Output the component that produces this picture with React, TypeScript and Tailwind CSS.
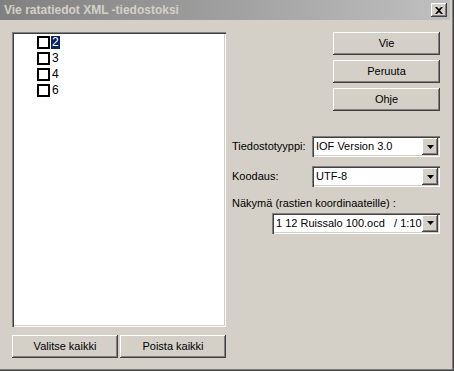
import React from "react";

const font = { fontFamily: "'Liberation Sans', Arial, sans-serif" };

function Btn({ label, className }: { label: string; className: string }) {
  return (
    <div
      className={
        "flex items-center justify-center bg-[#d4d0c8] text-[11px] text-black shadow-[inset_-1px_-1px_#404040,inset_1px_1px_#ffffff,inset_-2px_-2px_#808080] " +
        className
      }
    >
      {label}
    </div>
  );
}

function Combo({ value, className }: { value: string; className: string }) {
  return (
    <div
      className={
        "flex items-center bg-white p-[2px] shadow-[inset_1px_1px_#808080,inset_2px_2px_#404040,inset_-1px_-1px_#ffffff,inset_-2px_-2px_#d4d0c8] " +
        className
      }
    >
      <div className="flex-1 overflow-hidden whitespace-pre pl-[2px] text-[11px] text-black">{value}</div>
      <div className="flex h-full w-[16px] items-center justify-center bg-[#d4d0c8] shadow-[inset_-1px_-1px_#404040,inset_1px_1px_#ffffff,inset_-2px_-2px_#808080]">
        <svg width="7" height="4" viewBox="0 0 7 4">
          <polygon points="0,0 7,0 3.5,4" fill="#000" />
        </svg>
      </div>
    </div>
  );
}

export default function App() {
  const items = ["2", "3", "4", "6"];
  return (
    <div
      className="relative flex h-[371px] w-[454px] flex-col bg-[#d4d0c8] shadow-[inset_-1px_-1px_#404040,inset_-2px_-2px_#808080]"
      style={font}
    >
      <div className="flex h-[20px] w-[450px] items-center justify-between bg-gradient-to-r from-[#808080] to-[#c0c0c0] pl-[4px] pr-[3px]">
        <span className="text-[12px] font-bold text-[#d4d0c8]">Vie ratatiedot XML -tiedostoksi</span>
        <div className="flex h-[14px] w-[16px] items-center justify-center bg-[#d4d0c8] shadow-[inset_-1px_-1px_#404040,inset_1px_1px_#ffffff,inset_-2px_-2px_#808080]">
          <svg width="8" height="7" viewBox="0 0 8 7">
            <path d="M0 0 L2 0 L4 2 L6 0 L8 0 L5 3.5 L8 7 L6 7 L4 5 L2 7 L0 7 L3 3.5 Z" fill="#000" />
          </svg>
        </div>
      </div>
      <div className="flex flex-1 pl-[12px] pt-[12px]">
        <div className="flex w-[214px] flex-col">
          <div className="h-[295px] bg-white p-[2px] shadow-[inset_1px_1px_#808080,inset_2px_2px_#404040,inset_-1px_-1px_#ffffff,inset_-2px_-2px_#d4d0c8]">
            <div className="flex flex-col pl-[23px]">
              {items.map((it, i) => (
                <div key={it} className="flex h-[16px] items-center">
                  <div className="h-[13px] w-[13px] border-2 border-black bg-white" />
                  <span
                    className={
                      "ml-[1px] px-[1px] text-[12px] leading-[13px] " +
                      (i === 0 ? "bg-[#0a246a] text-white" : "text-black")
                    }
                  >
                    {it}
                  </span>
                </div>
              ))}
            </div>
          </div>
          <div className="mt-[8px] flex gap-[2px]">
            <Btn label="Valitse kaikki" className="h-[23px] w-[106px]" />
            <Btn label="Poista kaikki" className="h-[23px] w-[106px]" />
          </div>
        </div>
        <div className="ml-[6px] flex w-[208px] flex-col">
          <div className="flex flex-col items-end gap-[5px]">
            <Btn label="Vie" className="h-[23px] w-[107px]" />
            <Btn label="Peruuta" className="h-[23px] w-[107px]" />
            <Btn label="Ohje" className="h-[23px] w-[107px]" />
          </div>
          <div className="mt-[25px] flex items-center justify-between">
            <span className="text-[11px] text-black">Tiedostotyyppi:</span>
            <Combo value="IOF Version 3.0" className="h-[21px] w-[128px]" />
          </div>
          <div className="mt-[9px] flex items-center justify-between">
            <span className="text-[11px] text-black">Koodaus:</span>
            <Combo value="UTF-8" className="h-[21px] w-[128px]" />
          </div>
          <div className="mt-[8px] text-[11px] text-black">Näkymä (rastien koordinaateille) :</div>
          <div className="mt-[1px] flex justify-end">
            <Combo value="1 12 Ruissalo 100.ocd   / 1:10" className="h-[21px] w-[168px]" />
          </div>
        </div>
      </div>
    </div>
  );
}
